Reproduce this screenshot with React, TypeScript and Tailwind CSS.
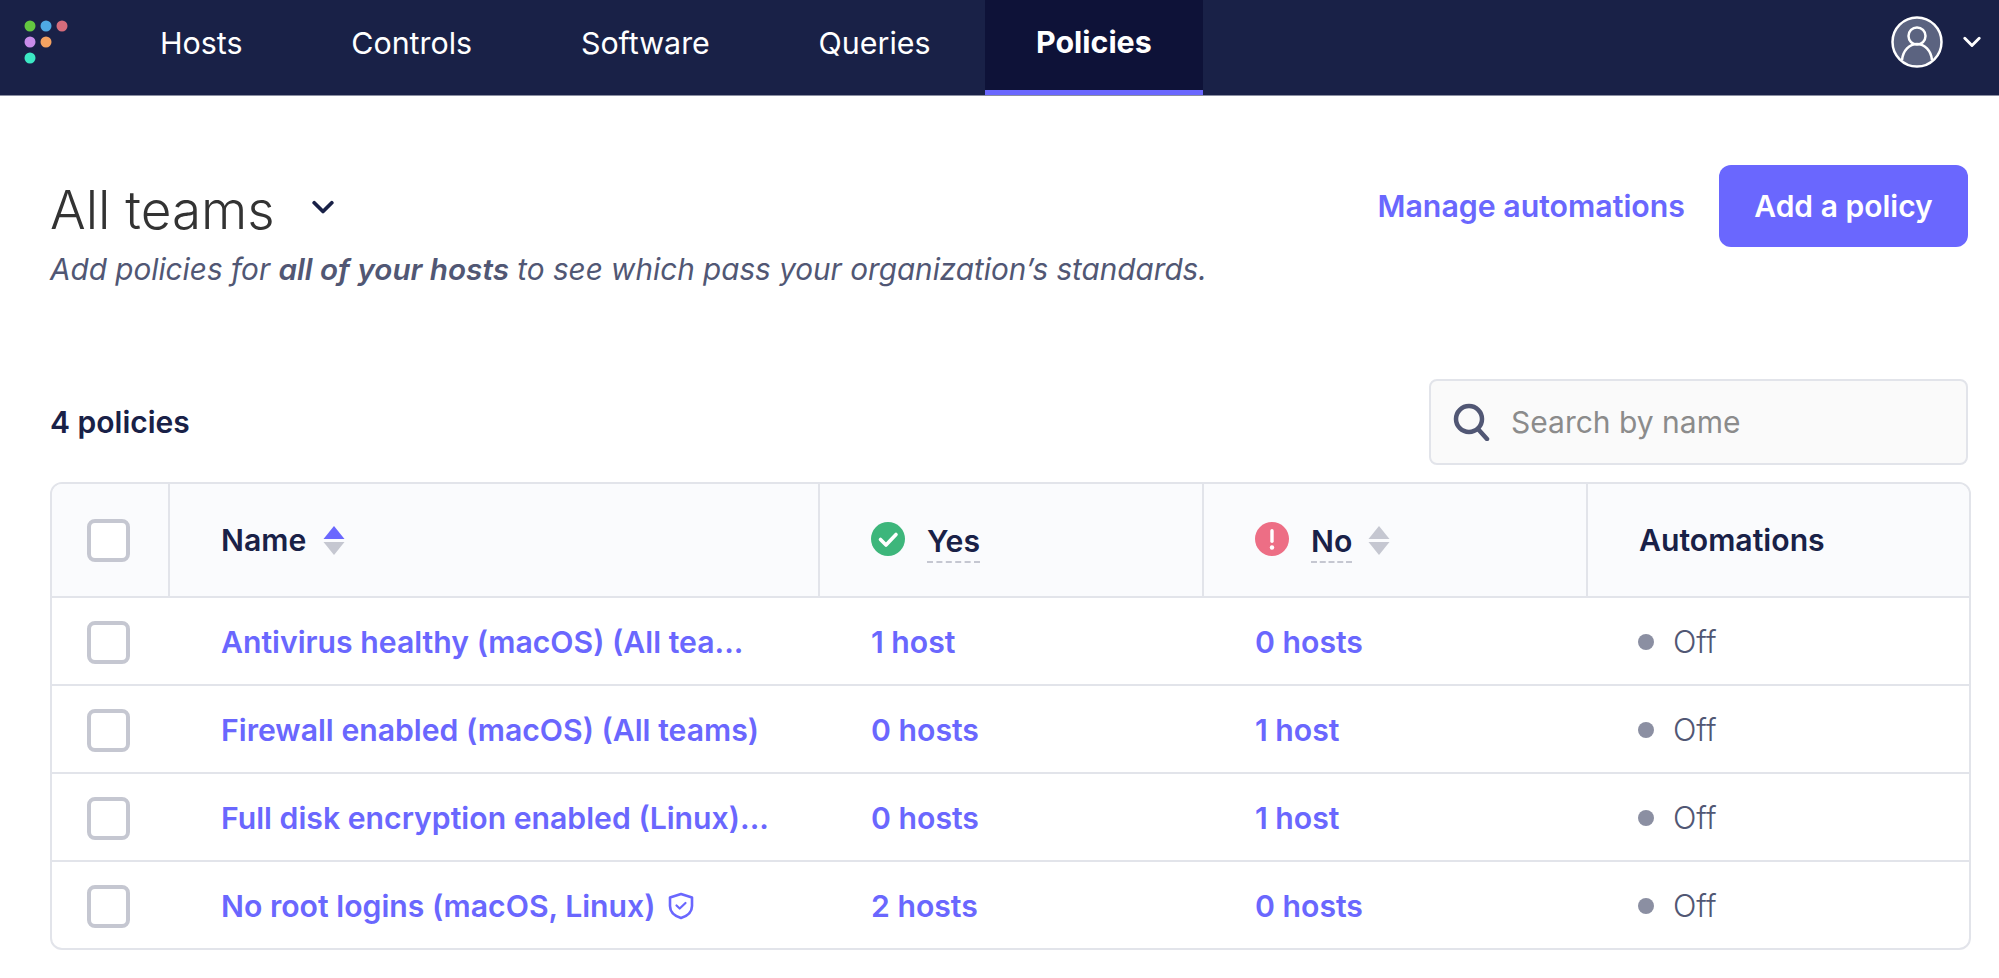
const NAV_ITEMS = ["Hosts", "Controls", "Software", "Queries", "Policies"];

const POLICIES = [
  { name: "Antivirus healthy (macOS) (All tea...", yes: "1 host", no: "0 hosts" },
  { name: "Firewall enabled (macOS) (All teams)", yes: "0 hosts", no: "1 host" },
  { name: "Full disk encryption enabled (Linux)...", yes: "0 hosts", no: "1 host" },
  { name: "No root logins (macOS, Linux)", yes: "2 hosts", no: "0 hosts", shield: true },
];

const COLS = "grid grid-cols-[118px_650px_384px_384px_1fr]";

function Logo() {
  return (
    <svg width="46" height="46" viewBox="0 0 46 46" className="shrink-0">
      <circle cx="6" cy="6" r="5.5" fill="#63c740" />
      <circle cx="22" cy="6" r="5.5" fill="#4fa9e3" />
      <circle cx="38" cy="6" r="5.5" fill="#d66c7b" />
      <circle cx="6" cy="22" r="5.5" fill="#c98deb" />
      <circle cx="22" cy="22" r="5.5" fill="#f4a261" />
      <circle cx="6" cy="38" r="5.5" fill="#3ce8c4" />
    </svg>
  );
}

function Avatar() {
  return (
    <svg width="52" height="52" viewBox="0 0 52 52">
      <circle cx="26" cy="26" r="24.5" fill="#5b6380" stroke="#fff" strokeWidth="2.5" />
      <circle cx="26" cy="20" r="8.5" fill="none" stroke="#fff" strokeWidth="2.5" />
      <path d="M11 44c1-9.500 7.500-16 15-16s14 6.500 15 16" fill="none" stroke="#fff" strokeWidth="2.5" />
    </svg>
  );
}

function Chevron({ width, color, strokeWidth }: { width: number; color: string; strokeWidth: number }) {
  return (
    <svg width={width} height={width * 0.65} viewBox="0 0 20 13" fill="none" stroke={color} strokeWidth={strokeWidth} strokeLinecap="round" strokeLinejoin="round">
      <path d="m2 2.500 8 8 8-8" />
    </svg>
  );
}

function SortIcon({ active }: { active?: boolean }) {
  return (
    <svg width="22" height="31" viewBox="0 0 22 31" className="shrink-0">
      <path d="M11 1 21.500 14H.5z" fill={active ? "#6a67fe" : "#c5c7d1"} />
      <path d="M11 30 21.500 17H.5z" fill="#c5c7d1" />
    </svg>
  );
}

function Checkbox() {
  return <div className="w-[43px] h-[43px] rounded-[8px] border-[4px] border-[#c5c7d1] bg-white" />;
}

function HeaderTip({ label }: { label: string }) {
  return <span className="border-b-2 border-dashed border-[#c5c7d1] pb-[2px] leading-[35px]">{label}</span>;
}

function ShieldIcon() {
  return (
    <svg width="26" height="28" viewBox="0 0 26 28" fill="none" stroke="#6a67fe" strokeWidth="2.6" strokeLinejoin="round" strokeLinecap="round" className="shrink-0">
      <path d="M13 2 24 5.500V14c0 6-4.500 10-11 12C6.500 24 2 20 2 14V5.500z" />
      <path d="m8.500 13.500 3.200 3 5.800-5.500" strokeWidth="2.2" />
    </svg>
  );
}

export default function App() {
  return (
    <div className="w-[1999px] h-[978px] overflow-hidden bg-white font-['Inter',sans-serif] text-[#192147]">
      <nav className="h-[96px] bg-[#192147] border-b border-[#8b8fa2] flex items-start justify-between">
        <div className="flex items-start">
          <div className="pl-[24px] pt-[20px] w-[105.500px]">
            <Logo />
          </div>
          <ul className="flex">
            {NAV_ITEMS.map((item) => (
              <li
                key={item}
                className={
                  item === "Policies"
                    ? "h-[95px] px-[51px] flex items-center bg-[#0e1238] border-b-[5px] border-[#6a67fe] text-white font-bold text-[30.400px]"
                    : "h-[95px] px-[54.400px] pb-[8px] flex items-center text-white text-[30.400px]"
                }
              >
                <span className={item === "Policies" ? "pb-[4px]" : ""}>{item}</span>
              </li>
            ))}
          </ul>
        </div>
        <div className="flex items-center gap-[20px] pt-[16px] pr-[18px]">
          <Avatar />
          <Chevron width={18} color="#fff" strokeWidth={3.2} />
        </div>
      </nav>

      <main className="pl-[50px] pr-[28px]">
        <div className="flex justify-between items-start pt-[69px] pr-[3px]">
          <div className="pt-[4px]">
            <div className="flex items-center h-[82px]">
              <h1 className="text-[53px] font-light text-[#333] leading-none">All teams</h1>
              <span className="ml-[37px] -mt-[6px]">
                <Chevron width={22} color="#192147" strokeWidth={3.4} />
              </span>
            </div>
            <p className="text-[29.700px] italic text-[#515774] leading-[36px]">
              Add policies for <b className="font-semibold">all of your hosts</b> to see which pass your organization’s standards.
            </p>
          </div>
          <div className="flex items-center gap-[34px]">
            <a className="text-[30.300px] font-semibold text-[#6a67fe] pt-[2px]">Manage automations</a>
            <button className="w-[249px] h-[82px] rounded-[12px] bg-[#6a67fe] text-white text-[30px] font-semibold">
              Add a policy
            </button>
          </div>
        </div>

        <div className="flex justify-between items-center mt-[92px] pr-[3px]">
          <span className="text-[30px] font-semibold">4 policies</span>
          <div className="w-[539px] h-[86px] rounded-[8px] border-2 border-[#e2e4ea] bg-[#fafafa] flex items-center pl-[22px] gap-[20px]">
            <svg width="38" height="38" viewBox="0 0 38 38" fill="none" stroke="#515774" strokeWidth="4.5" strokeLinecap="round">
              <circle cx="16" cy="16" r="13" />
              <path d="m25 26 9 10" />
            </svg>
            <span className="text-[30px] text-[#8b8b8b]">Search by name</span>
          </div>
        </div>

        <div className="mt-[17px] rounded-[12px] border-2 border-[#e2e4ea] overflow-hidden text-[30.200px]">
          <div className={`${COLS} h-[112px] bg-[#fafbfd] font-semibold`}>
            <div className="flex items-center pl-[35px] border-r-2 border-[#e2e4ea]">
              <Checkbox />
            </div>
            <div className="flex items-center pl-[51px] gap-[17px] pt-[1px] border-r-2 border-[#e2e4ea]">
              <span>Name</span>
              <SortIcon active />
            </div>
            <div className="flex items-center pl-[51px] border-r-2 border-[#e2e4ea]">
              <svg width="34" height="34" viewBox="0 0 34 34" className="shrink-0 -mt-[2px]">
                <circle cx="17" cy="17" r="17" fill="#3db67b" />
                <path d="m9.500 17.500 5.500 5.500 10-10.500" fill="none" stroke="#fff" strokeWidth="3.6" strokeLinecap="round" strokeLinejoin="round" />
              </svg>
              <span className="ml-[22px] mt-[4px]"><HeaderTip label="Yes" /></span>
            </div>
            <div className="flex items-center pl-[51px] border-r-2 border-[#e2e4ea]">
              <svg width="34" height="34" viewBox="0 0 34 34" className="shrink-0 -mt-[2px]">
                <circle cx="17" cy="17" r="17" fill="#ed6e85" />
                <rect x="15.300" y="7" width="3.400" height="14" rx="1.700" fill="#fff" />
                <circle cx="17" cy="25.500" r="2.200" fill="#fff" />
              </svg>
              <span className="ml-[22px] mt-[4px]"><HeaderTip label="No" /></span>
              <span className="ml-[16px]"><SortIcon /></span>
            </div>
            <div className="flex items-center pl-[51px] pt-[1px]">Automations</div>
          </div>
          {POLICIES.map((policy) => (
            <div key={policy.name} className={`${COLS} h-[88px] border-t-2 border-[#e2e4ea] items-center font-semibold text-[#6a67fe]`}>
              <div className="pl-[35px] pt-[2px]">
                <Checkbox />
              </div>
              <div className="pl-[51px] pt-[3px] flex items-center gap-[12px]">
                <span>{policy.name}</span>
                {policy.shield && <ShieldIcon />}
              </div>
              <div className="pl-[51px] pt-[3px]">{policy.yes}</div>
              <div className="pl-[51px] pt-[3px]">{policy.no}</div>
              <div className="pl-[50px] pt-[2px] flex items-center gap-[19px] font-light text-[30.800px] text-[#515774]">
                <span className="w-[16px] h-[16px] rounded-full bg-[#8b8fa2]" />
                Off
              </div>
            </div>
          ))}
        </div>
      </main>
    </div>
  );
}
